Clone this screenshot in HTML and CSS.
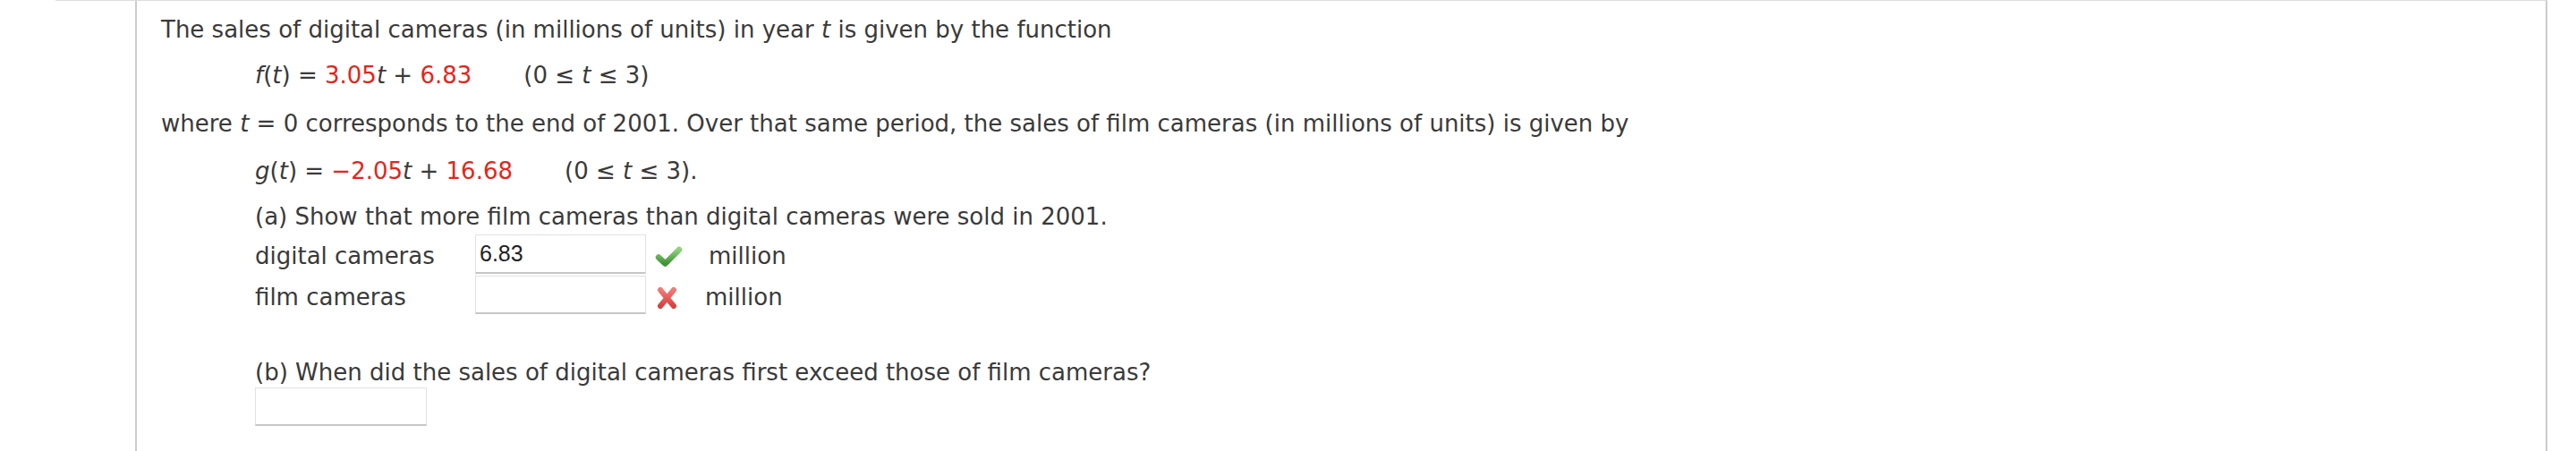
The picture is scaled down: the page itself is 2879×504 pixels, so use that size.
FILE: index.html
```html
<!DOCTYPE html>
<html lang="en">
<head>
<meta charset="utf-8">
<title>Digital and film cameras</title>
<link rel="stylesheet" href="styles.css">
</head>
<body>
<div class="frame">
  <div class="gutter"></div>
  <div class="content">
    <p class="text">The sales of digital cameras (in millions of units) in year <i>t</i> is given by the function</p>
    <p class="math m-f"><i>f</i>(<i>t</i>) = <span class="red">3.05</span><i>t</i> + <span class="red">6.83</span><span class="domain">(0 ≤ <i>t</i> ≤ 3)</span></p>
    <p class="text m-where">where <i>t</i> = 0 corresponds to the end of 2001. Over that same period, the sales of film cameras (in millions of units) is given by</p>
    <p class="math m-g"><i>g</i>(<i>t</i>) = <span class="red">−2.05</span><i>t</i> + <span class="red">16.68</span><span class="domain">(0 ≤ <i>t</i> ≤ 3).</span></p>
    <p class="part m-a">(a) Show that more film cameras than digital cameras were sold in 2001.</p>
    <div class="row row-1">
      <span class="label">digital cameras</span>
      <span class="field">6.83</span>
      <svg class="icon check" width="31" height="25" viewBox="0 0 31 25">
        <defs>
          <linearGradient id="g-check" x1="0" y1="0" x2="0" y2="1">
            <stop offset="0" stop-color="#8fd07f"/>
            <stop offset="1" stop-color="#3f9436"/>
          </linearGradient>
        </defs>
        <path d="M4 13.5 L11.5 20.5 L27 5" fill="none" stroke="url(#g-check)" stroke-width="6.5" stroke-linecap="round" stroke-linejoin="round"/>
      </svg>
      <span class="unit">million</span>
    </div>
    <div class="row row-2">
      <span class="label">film cameras</span>
      <span class="field"></span>
      <svg class="icon cross" width="25" height="28" viewBox="0 0 25 28">
        <defs>
          <linearGradient id="g-cross" x1="0" y1="0" x2="0" y2="1">
            <stop offset="0" stop-color="#f07a78"/>
            <stop offset="1" stop-color="#d9403e"/>
          </linearGradient>
        </defs>
        <path d="M5 5 L20 23 M20 5 L5 23" fill="none" stroke="url(#g-cross)" stroke-width="6" stroke-linecap="round"/>
      </svg>
      <span class="unit">million</span>
    </div>
    <p class="part m-b">(b) When did the sales of digital cameras first exceed those of film cameras?</p>
    <span class="field field-b"></span>
  </div>
</div>
</body>
</html>
```
FILE: styles.css
```css
html, body {
  margin: 0;
  padding: 0;
  background: #ffffff;
  height: 504px;
  overflow: hidden;
}

body {
  font-family: "DejaVu Sans", Verdana, sans-serif;
  font-size: 26px;
  line-height: 30px;
  color: #3a3a3a;
}

.frame {
  display: flex;
  margin-left: 62px;
  width: 2783px;
  min-height: 503px;
  border-top: 1px solid #dddddd;
  border-right: 2px solid #cccccc;
}

.gutter {
  width: 89px;
  flex: none;
}

.content {
  flex: 1;
  border-left: 2px solid #cccccc;
  padding: 17px 0 0 27px;
}

p {
  margin: 0;
}

i {
  font-style: oblique;
}

.red {
  color: #e3261c;
}

.math,
.part,
.row,
.field-b {
  margin-left: 105px;
}

.domain {
  margin-left: 58px;
}

.m-f { margin-top: 21px; }
.m-where { margin-top: 24px; }
.m-g { margin-top: 23px; }
.m-a { margin-top: 21px; }
.m-b { margin-top: 50px; }

.row {
  display: flex;
  align-items: center;
}

.row-1 { margin-top: 5px; height: 44px; }
.row-2 { margin-top: 2px; height: 43px; }

.label,
.unit {
  padding-top: 4px;
}

.label {
  width: 246px;
  flex: none;
}

.field {
  display: block;
  box-sizing: border-box;
  width: 191px;
  height: 100%;
  flex: none;
  background: #ffffff;
  border: 1px solid #e2e2e2;
  border-bottom: 2px solid #c6c6c6;
  padding: 5px 0 0 4px;
  font-family: "Liberation Sans", Arial, sans-serif;
  font-size: 25px;
  line-height: 30px;
  color: #222222;
}

.icon {
  display: block;
  flex: none;
  margin-left: 10px;
  margin-right: 29px;
}

.check { margin-top: 4px; }
.cross { margin-left: 11px; margin-right: 30px; margin-top: 6px; }

.field-b {
  display: block;
  margin-top: 2px;
  width: 192px;
  height: 43px;
}
```
